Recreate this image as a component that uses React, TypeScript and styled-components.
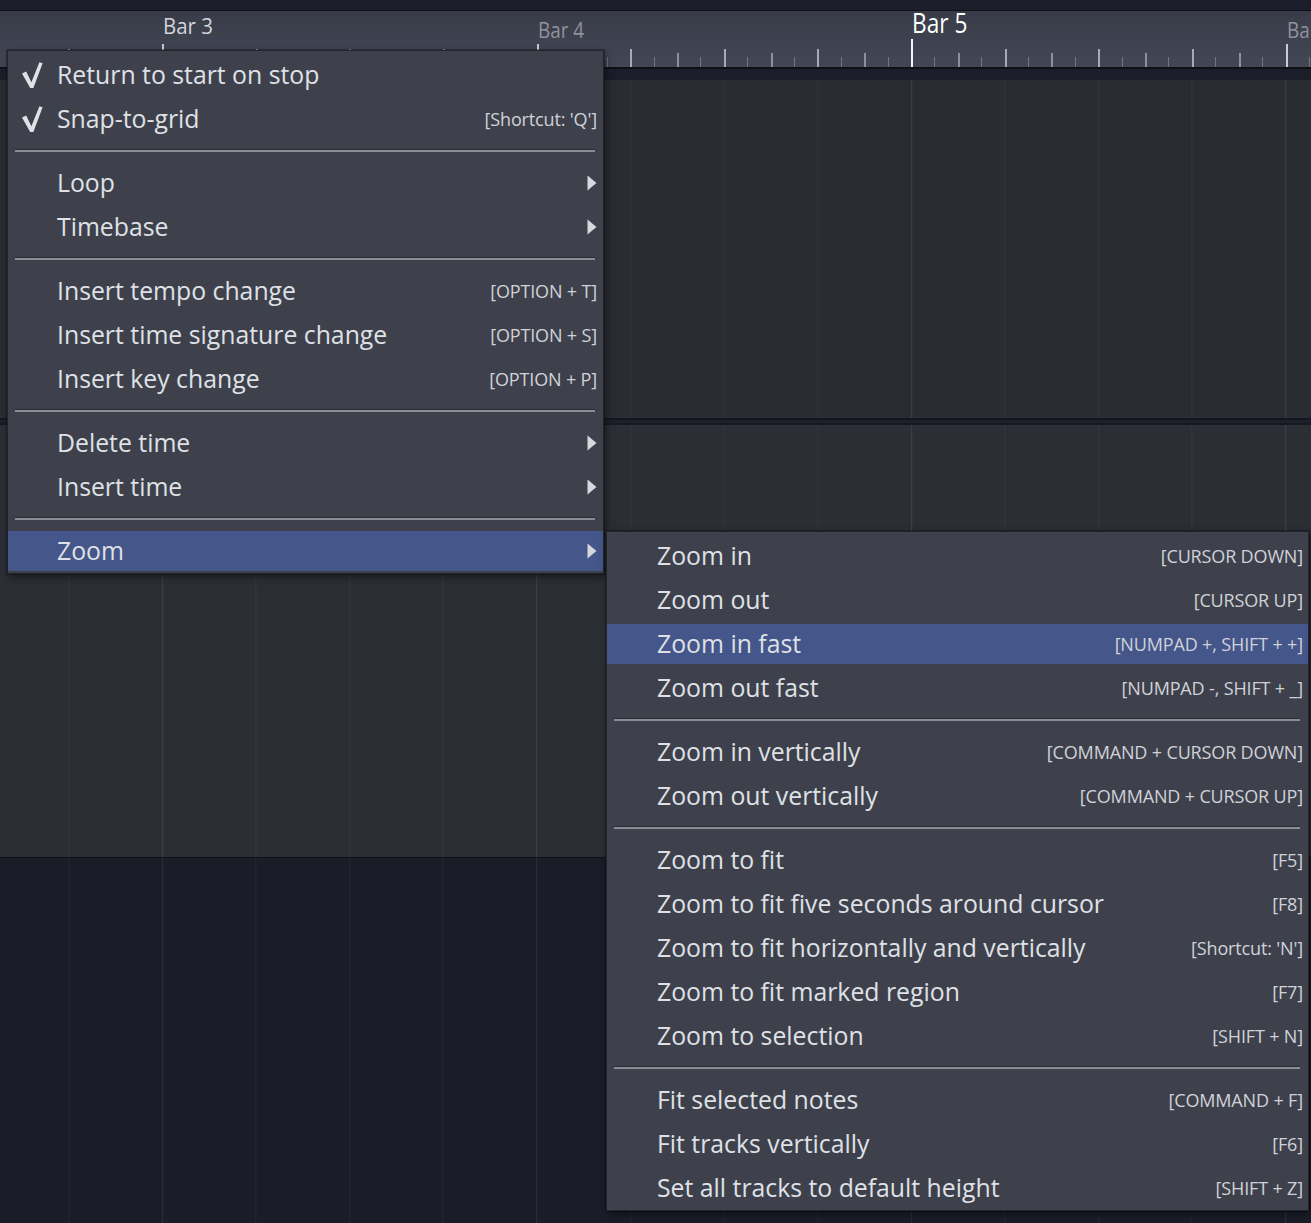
import React from "react"
import styled, { createGlobalStyle, css } from "styled-components"

// Timeline constants
const BAR_ORIGIN = 162 // x of "Bar 3"
const BAR_WIDTH = 374.5
const STEP = BAR_WIDTH / 16
const FIRST_BAR = 3

type TickKind = "current" | "bar" | "beat" | "eighth" | "sixteenth"
type LabelTone = "current" | "odd" | "even"

type MenuEntry =
  | "separator"
  | {
      label: string
      shortcut?: string
      checked?: boolean
      submenu?: boolean
      active?: boolean
    }

const mainMenu: MenuEntry[] = [
  { label: "Return to start on stop", checked: true },
  { label: "Snap-to-grid", checked: true, shortcut: "[Shortcut: 'Q']" },
  "separator",
  { label: "Loop", submenu: true },
  { label: "Timebase", submenu: true },
  "separator",
  { label: "Insert tempo change", shortcut: "[OPTION + T]" },
  { label: "Insert time signature change", shortcut: "[OPTION + S]" },
  { label: "Insert key change", shortcut: "[OPTION + P]" },
  "separator",
  { label: "Delete time", submenu: true },
  { label: "Insert time", submenu: true },
  "separator",
  { label: "Zoom", submenu: true, active: true },
]

const zoomMenu: MenuEntry[] = [
  { label: "Zoom in", shortcut: "[CURSOR DOWN]" },
  { label: "Zoom out", shortcut: "[CURSOR UP]" },
  { label: "Zoom in fast", shortcut: "[NUMPAD +, SHIFT + +]", active: true },
  { label: "Zoom out fast", shortcut: "[NUMPAD -, SHIFT + _]" },
  "separator",
  { label: "Zoom in vertically", shortcut: "[COMMAND + CURSOR DOWN]" },
  { label: "Zoom out vertically", shortcut: "[COMMAND + CURSOR UP]" },
  "separator",
  { label: "Zoom to fit", shortcut: "[F5]" },
  { label: "Zoom to fit five seconds around cursor", shortcut: "[F8]" },
  { label: "Zoom to fit horizontally and vertically", shortcut: "[Shortcut: 'N']" },
  { label: "Zoom to fit marked region", shortcut: "[F7]" },
  { label: "Zoom to selection", shortcut: "[SHIFT + N]" },
  "separator",
  { label: "Fit selected notes", shortcut: "[COMMAND + F]" },
  { label: "Fit tracks vertically", shortcut: "[F6]" },
  { label: "Set all tracks to default height", shortcut: "[SHIFT + Z]" },
]

// Utils
const buildTicks = () => {
  const ticks: { x: number; kind: TickKind }[] = []
  for (let i = -7; i <= 50; i++) {
    const x = BAR_ORIGIN + i * STEP
    let kind: TickKind = "sixteenth"
    if (i % 16 === 0) kind = FIRST_BAR + i / 16 === 5 ? "current" : "bar"
    else if (i % 4 === 0) kind = "beat"
    else if (i % 2 === 0) kind = "eighth"
    ticks.push({ x, kind })
  }
  return ticks
}

const bars = [3, 4, 5, 6].map((bar) => ({
  bar,
  x: BAR_ORIGIN + (bar - FIRST_BAR) * BAR_WIDTH,
  tone: (bar === 5 ? "current" : bar % 2 ? "odd" : "even") as LabelTone,
}))

const CheckMark = () => (
  <svg width="21" height="26" viewBox="0 0 21 26">
    <path d="M0 11.4 L4.2 9.6 L9.4 20.2 L17.4 0.2 L20.6 1.3 L11.4 26 L8.2 26 Z" fill="#dfe1e6" />
  </svg>
)

const SubmenuArrow = () => (
  <svg width="10" height="16" viewBox="0 0 10 16">
    <path d="M0.5 0.5 L9.5 8 L0.5 15.5 Z" fill="#d6d8de" />
  </svg>
)

const renderEntries = (entries: MenuEntry[], gutter: number, trail: number) =>
  entries.map((entry, index) => {
    if (entry === "separator") return <Separator key={`sep-${index}`} />

    return (
      <Row key={entry.label} $active={entry.active} $gutter={gutter} $trail={trail}>
        <CheckSlot>{entry.checked && <CheckMark />}</CheckSlot>
        <Label>{entry.label}</Label>
        {entry.shortcut && <Shortcut>{entry.shortcut}</Shortcut>}
        {entry.submenu && <SubmenuArrow />}
      </Row>
    )
  })

const App: React.FC = () => {
  return (
    <>
      <GlobalStyle />
      <Screen>
        <TopStrip />
        <Ruler>
          {buildTicks().map(({ x, kind }) => (
            <Tick key={x} $kind={kind} style={{ left: Math.round(x) }} />
          ))}
          {bars.map(({ bar, x, tone }) => (
            <BarLabel key={bar} $tone={tone} style={{ left: Math.round(x) + 1 }}>
              Bar {bar}
            </BarLabel>
          ))}
        </Ruler>
        <RulerShadow />
        <Lane $tone="upper" $height={338} />
        <LaneDivider />
        <Lane $tone="lower" $height={432} />
        <Lane $tone="empty" />

        <Menu $x={7} $y={50} $width={597}>
          {renderEntries(mainMenu, 14, 6)}
        </Menu>

        <Menu $x={606} $y={531} $width={703}>
          {renderEntries(zoomMenu, 15, 5)}
        </Menu>
      </Screen>
    </>
  )
}

const GlobalStyle = createGlobalStyle`
  html, body {
    margin: 0;
    padding: 0;
    background: #1a1d28;
  }

  body {
    font-family: "Open Sans", "Noto Sans", "Liberation Sans", sans-serif;
    -webkit-font-smoothing: antialiased;
  }
`

const Screen = styled.div`
  position: relative;
  display: flex;
  flex-direction: column;
  width: 1311px;
  height: 1223px;
  overflow: hidden;
  background: #1a1d28;
`

const TopStrip = styled.div`
  flex: none;
  height: 10px;
  background: #1c1f2b;
  border-bottom: 1px solid #0e1016;
`

const Ruler = styled.div`
  position: relative;
  flex: none;
  height: 56px;
  background: linear-gradient(180deg, #393c48 0%, #3f4250 60%, #434655 100%);
`

const tickStyles: Record<TickKind, ReturnType<typeof css>> = {
  current: css`
    top: 28px;
    width: 2px;
    background: #f4f5f7;
  `,
  bar: css`
    top: 33px;
    width: 2px;
    background: #c9ccd2;
  `,
  beat: css`
    top: 38px;
    width: 2px;
    background: #a7aab2;
  `,
  eighth: css`
    top: 42px;
    width: 2px;
    background: #8e919a;
  `,
  sixteenth: css`
    top: 46px;
    width: 1px;
    background: #747781;
  `,
}

const Tick = styled.span<{ $kind: TickKind }>`
  position: absolute;
  bottom: 0;
  ${({ $kind }) => tickStyles[$kind]};
`

const labelStyles: Record<LabelTone, ReturnType<typeof css>> = {
  current: css`
    top: -2px;
    font-size: 27px;
    color: #ffffff;
    transform: scaleX(0.84);
  `,
  odd: css`
    top: 3px;
    font-size: 22px;
    color: #d2d5db;
    transform: scaleX(0.93);
  `,
  even: css`
    top: 9px;
    font-size: 21px;
    color: #8f929b;
    transform: scaleX(0.9);
  `,
}

const BarLabel = styled.span<{ $tone: LabelTone }>`
  position: absolute;
  line-height: 1;
  white-space: nowrap;
  transform-origin: left center;
  ${({ $tone }) => labelStyles[$tone]};
`

const RulerShadow = styled.div`
  flex: none;
  height: 11px;
  background: #1b1e28;
  border-top: 2px solid #0f1117;
`

const gridLines = (beat: string, bar: string) => css`
  background-image: repeating-linear-gradient(
      90deg,
      ${bar} 0 1px,
      transparent 1px ${BAR_WIDTH}px
    ),
    repeating-linear-gradient(90deg, ${beat} 0 1px, transparent 1px ${STEP * 4}px);
  background-position: ${BAR_ORIGIN}px 0, ${BAR_ORIGIN - STEP * 4}px 0;
`

const laneTones = {
  upper: css`
    background-color: #2a2c33;
    ${gridLines("#32343c", "#3a3c44")};
  `,
  lower: css`
    background-color: #2c2e36;
    ${gridLines("#34363e", "#3c3e46")};
    border-bottom: 1px solid #0f1118;
  `,
  empty: css`
    flex: 1;
    background-color: #1a1d28;
    ${gridLines("#23262f", "#292c36")};
  `,
}

const Lane = styled.div<{ $tone: keyof typeof laneTones; $height?: number }>`
  flex: none;
  height: ${({ $height }) => ($height ? `${$height}px` : "auto")};
  ${({ $tone }) => laneTones[$tone]};
`

const LaneDivider = styled.div`
  flex: none;
  height: 3px;
  background: #1e2029;
  border-top: 2px solid #141720;
  border-bottom: 2px solid #161922;
`

const Menu = styled.div<{ $x: number; $y: number; $width: number }>`
  position: absolute;
  left: ${({ $x }) => $x}px;
  top: ${({ $y }) => $y}px;
  width: ${({ $width }) => $width}px;
  box-sizing: border-box;
  display: flex;
  flex-direction: column;
  padding: 2px 0 0;
  background: #3e414c;
  border: 1px solid #23252d;
  box-shadow: 0 0 0 1px rgba(0, 0, 0, 0.25), 2px 3px 8px rgba(0, 0, 0, 0.45);
`

const Row = styled.div<{ $active?: boolean; $gutter: number; $trail: number }>`
  display: flex;
  align-items: center;
  height: 40px;
  margin: 2px 0;
  padding: 0 ${({ $trail }) => $trail}px 0 ${({ $gutter }) => $gutter}px;
  background: ${({ $active }) => ($active ? "#44568a" : "transparent")};
`

const CheckSlot = styled.span`
  flex: none;
  display: flex;
  align-items: center;
  width: 35px;
  height: 100%;
`

const Label = styled.span`
  flex: 1;
  padding-bottom: 2px;
  font-size: 24.8px;
  line-height: 38px;
  color: #dfe1e6;
  white-space: nowrap;
`

const Shortcut = styled.span`
  flex: none;
  font-size: 18px;
  letter-spacing: -0.15px;
  color: #cfd2d8;
  white-space: nowrap;
`

const Separator = styled.hr`
  flex: none;
  height: 2px;
  margin: 8px 8px 9px 7px;
  border: 0;
  border-top: 1px solid #2b2d35;
  background: #8a8d96;
`

export default App
